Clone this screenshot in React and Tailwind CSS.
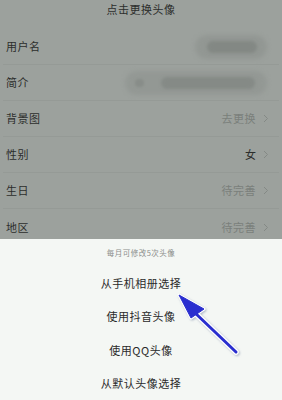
import React from "react";

const font = { fontFamily: '"Noto Sans CJK SC", "Noto Sans", sans-serif' };

function Chevron() {
  return (
    <svg width="6" height="9" viewBox="0 0 6 9" className="ml-[7px]">
      <path d="M1 1 L4.5 4.5 L1 8" fill="none" stroke="#848985" strokeWidth="1" />
    </svg>
  );
}

function Row({ label, children, last }) {
  return (
    <div className={`h-[36px] mx-[3px] flex items-center pl-[3px] pr-[10px] ${last ? "" : "border-b border-[#959a96]"}`}>
      <span className="text-[11px] text-[#2c2e2c] tracking-[0.5px]">{label}</span>
      <div className="ml-auto flex items-center">{children}</div>
    </div>
  );
}

export default function App() {
  return (
    <div className="w-[282px] h-[400px] overflow-hidden relative bg-[#9ca19d]" style={font}>
      <div className="h-[29px] flex items-start justify-center pt-[1px]">
        <span className="text-[11px] text-[#2c2e2c] tracking-[0.5px]">点击更换头像</span>
      </div>
      <Row label="用户名">
        <div className="relative w-[72px] h-[24px] mr-[2px]">
          <div className="absolute inset-0 rounded-full bg-[#929793] blur-[2px]" />
          <div className="absolute left-[12px] right-[10px] top-[6px] bottom-[6px] rounded-full bg-[#838884] blur-[1.5px]" />
        </div>
      </Row>
      <Row label="简介">
        <div className="relative w-[142px] h-[24px] mr-[2px]">
          <div className="absolute inset-0 rounded-full bg-[#939894] blur-[2px]" />
          <div className="absolute left-[10px] top-[8px] w-[9px] h-[8px] rounded-full bg-[#888d89] blur-[1px]" />
          <div className="absolute left-[36px] right-[12px] top-[6px] bottom-[6px] rounded-full bg-[#858a86] blur-[1.5px]" />
        </div>
      </Row>
      <Row label="背景图">
        <span className="text-[11px] text-[#7a7f7b] tracking-[0.5px]">去更换</span>
        <Chevron />
      </Row>
      <Row label="性别">
        <span className="text-[11px] text-[#2c2e2c]">女</span>
        <Chevron />
      </Row>
      <Row label="生日">
        <span className="text-[11px] text-[#7a7f7b] tracking-[0.5px]">待完善</span>
        <Chevron />
      </Row>
      <Row label="地区" last>
        <span className="text-[11px] text-[#7a7f7b] tracking-[0.5px]">待完善</span>
        <Chevron />
      </Row>

      <div className="absolute left-0 right-0 top-[239px] bottom-0 bg-[#f4f7f4] flex flex-col items-center">
        <div className="h-[29px] flex items-center">
          <span className="text-[7.5px] text-[#8a8d8a] tracking-[0.5px]">每月可修改5次头像</span>
        </div>
        {["从手机相册选择", "使用抖音头像", "使用QQ头像", "从默认头像选择"].map((t) => (
          <div key={t} className="h-[35px] flex items-center">
            <span className="text-[11px] text-[#2a2a2a] tracking-[0.5px]">{t}</span>
          </div>
        ))}
      </div>

      <svg className="absolute left-0 top-0" width="282" height="400" viewBox="0 0 282 400">
        <defs>
          <filter id="sh" x="-20%" y="-20%" width="140%" height="140%">
            <feDropShadow dx="1" dy="1" stdDeviation="1.2" floodColor="#7b8aa8" floodOpacity="0.6" />
          </filter>
        </defs>
        <g filter="url(#sh)">
          <line x1="236" y1="352" x2="193" y2="311" stroke="#ffffff" strokeWidth="5.5" strokeLinecap="round" />
          <path d="M179 295 L204 309 L191 318 Z" fill="#ffffff" stroke="#ffffff" strokeWidth="3" strokeLinejoin="round" />
          <line x1="236" y1="352" x2="193" y2="311" stroke="#2a2fcf" strokeWidth="3" strokeLinecap="round" />
          <path d="M179 295 L204 309 L191 318 Z" fill="#2a2fcf" stroke="#2a2fcf" strokeWidth="1" strokeLinejoin="round" />
        </g>
      </svg>
    </div>
  );
}
